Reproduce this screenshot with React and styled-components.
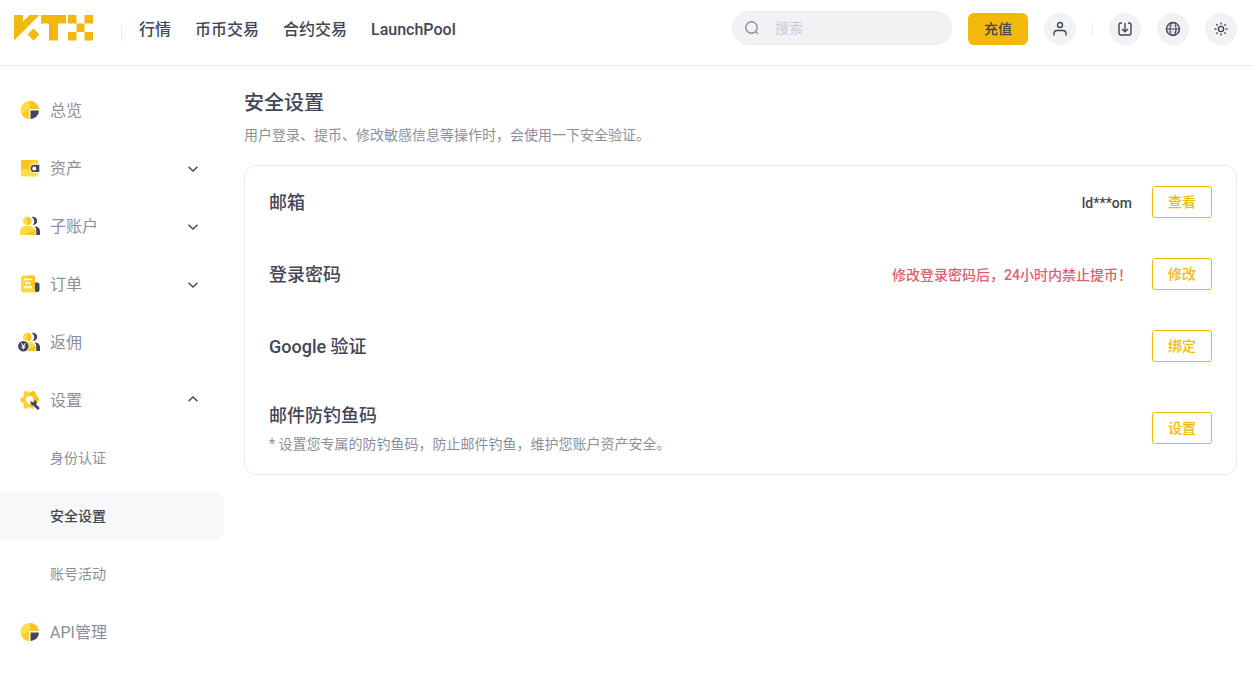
import React, { useState } from "react";
import styled, { createGlobalStyle } from "styled-components";

const navList = ["行情", "币币交易", "合约交易", "LaunchPool"];

const settingList = [
  { name: "身份认证", path: "#identity" },
  { name: "安全设置", path: "#security" },
  { name: "账号活动", path: "#activity" },
];

const Logo = () => (
  <svg width="80" height="26" viewBox="0 0 80 26" fill="#f0b90b" aria-hidden="true">
    <path d="M0 0H9V6.5L15.5 0H25.5L0 25.5Z" />
    <path d="M19.5 13.5L25.5 19.5L19.5 25.5L13.5 19.5Z" />
    <path d="M27 0H52V8.5H44V25.5H35V8.5H27Z" />
    <path d="M54 0H62.5V8.5H54ZM70.5 0H79V8.5H70.5ZM62.5 8.5H70.5V17H62.5ZM54 17H62.5V25.5H54ZM70.5 17H79V25.5H70.5Z" />
  </svg>
);

const OverviewIcon = () => (
  <svg width="20" height="20" viewBox="0 0 20 20" aria-hidden="true">
    <path d="M10 1A9 9 0 0 0 9 19V10L10 9Z" fill="#ffdc4a" />
    <path d="M10 1A9 9 0 0 1 19 9H10Z" fill="#fac31e" />
    <path d="M1.6 13.4L9.200 9V19A9 9 0 0 1 1.600 13.400Z" fill="#fccb2b" />
    <path d="M10.500 10.500H19A8.600 8.600 0 0 1 10.500 19Z" fill="#434656" />
  </svg>
);

const AssetIcon = () => (
  <svg width="20" height="20" viewBox="0 0 20 20" aria-hidden="true">
    <path d="M1 11H18V17A1.500 1.500 0 0 1 16.500 18.500H2.500A1.500 1.500 0 0 1 1 17Z" fill="#ffdc4a" />
    <path d="M1 3.500A1.500 1.500 0 0 1 2.500 2H16.500A1.500 1.500 0 0 1 18 3.500V11H1Z" fill="#fac31e" />
    <path d="M10 2H16.500A1.500 1.500 0 0 1 18 3.500V11H8Z" fill="#fdcf33" />
    <path d="M15 5.700H20V15H15A4.650 4.650 0 0 1 15 5.700Z" fill="#fff" />
    <path d="M14.300 6.800H19.300V14H14.300A3.600 3.600 0 0 1 14.300 6.800Z" fill="#434656" />
    <circle cx="14.300" cy="10.400" r="2" fill="#fff" />
  </svg>
);

const AccountIcon = ({ rebate }) => (
  <svg
    width={rebate ? 22 : 20}
    height="20"
    viewBox={rebate ? "-2 0 22 20" : "0 0 20 20"}
    aria-hidden="true"
  >
    <path d="M11.500 0.800C19 0 19 9 12.500 9.300C15.300 6.500 14.500 3 11.500 0.800Z" fill="#434656" />
    <path d="M14.500 10.200C18.500 10.400 20 12.600 20 15.500V19H16.200V14.500C16.200 12.700 15.800 11.300 14.500 10.200Z" fill="#434656" />
    <circle cx="7.500" cy="5" r="4.200" fill="#fac31e" />
    <path d="M7.500 0.800A4.200 4.200 0 0 0 7.500 9.200Z" fill="#ffdc4a" />
    <path d="M0 19V15.500A5.500 5.500 0 0 1 5.500 10H10A5.500 5.500 0 0 1 15.300 15.500V19Z" fill="#ffd83f" />
    <path d="M15.300 13.500V19H5Z" fill="#fac31e" />
    {rebate && (
      <>
        <circle cx="3.400" cy="14.200" r="6" fill="#fff" />
        <circle cx="3.400" cy="14.200" r="5.300" fill="#434656" />
        <path
          d="M1.300 11.200L3.400 14L5.500 11.200M3.400 14V17.400M1.500 14H5.300M1.500 15.700H5.300"
          stroke="#fff"
          fill="none"
        />
      </>
    )}
  </svg>
);

const OrderIcon = () => (
  <svg width="20" height="20" viewBox="0 0 20 20" aria-hidden="true">
    <path d="M14 8.500H17.500A2 2 0 0 1 19.500 10.500V15.500A2.500 2.500 0 0 1 17 18H14Z" fill="#434656" />
    <path d="M1 3.500A2 2 0 0 1 3 1.500H13A2 2 0 0 1 15 3.500V16.500L16 18.500H3A2 2 0 0 1 1 16.500Z" fill="#ffd83f" />
    <path d="M8 1.500H13A2 2 0 0 1 15 3.500V16L8 9Z" fill="#fac31e" />
    <path
      d="M4 5.500H12M5 9H11M4 13.800L6.300 12L8 14L9.700 12L12 13.800"
      stroke="#fff"
      strokeWidth="1.500"
      fill="none"
    />
  </svg>
);

const SettingIcon = () => (
  <svg width="20" height="20" viewBox="0 0 20 20" aria-hidden="true">
    <g fill="#fdcf33">
      <circle cx="9.700" cy="10" r="7.500" />
      <circle cx="6" cy="3.600" r="2.500" />
      <circle cx="13.400" cy="3.600" r="2.500" />
      <circle cx="2.600" cy="9.800" r="2.500" />
      <circle cx="16.800" cy="9.800" r="2.500" />
      <circle cx="6" cy="16.200" r="2.500" />
      <circle cx="12.500" cy="16.200" r="2.500" />
    </g>
    <path d="M9.700 2.500L13 1.200L16 4.500L19 9L16 12L9.700 10Z" fill="#fac31e" />
    <circle cx="9.700" cy="9.700" r="3.700" fill="#fff" />
    <path d="M12 12L18.500 19" stroke="#fff" strokeWidth="4" />
    <path d="M14.200 14.200L18 18.300" stroke="#434656" strokeWidth="2.800" strokeLinecap="round" />
    <path d="M10 11L13.300 12.300L15.300 9.800L17 13L15 15.800L11.500 15.200Z" fill="#434656" />
  </svg>
);

const Arrow = ({ up }) => (
  <svg width="12" height="12" viewBox="0 0 12 12" fill="none" stroke="#434656" strokeWidth="1.400" aria-hidden="true">
    {up ? <path d="M1.500 7.300L6 3L10.500 7.300" /> : <path d="M1.500 4.700L6 9L10.500 4.700" />}
  </svg>
);

const LineIcon = ({ children }) => (
  <svg
    width="16"
    height="16"
    viewBox="0 0 16 16"
    fill="none"
    stroke="currentColor"
    strokeWidth="1.400"
    aria-hidden="true"
  >
    {children}
  </svg>
);

const menuList = [
  { name: "总览", icon: <OverviewIcon /> },
  { name: "资产", icon: <AssetIcon />, fold: true },
  { name: "子账户", icon: <AccountIcon />, fold: true },
  { name: "订单", icon: <OrderIcon />, fold: true },
  { name: "返佣", icon: <AccountIcon rebate /> },
  { name: "设置", icon: <SettingIcon />, fold: true, children: settingList },
  { name: "API管理", icon: <OverviewIcon /> },
];

const securityList = [
  { title: "邮箱", value: "ld***om", button: "查看" },
  { title: "登录密码", warn: "修改登录密码后，24小时内禁止提币！", button: "修改" },
  { title: "Google 验证", button: "绑定" },
  {
    title: "邮件防钓鱼码",
    desc: "* 设置您专属的防钓鱼码，防止邮件钓鱼，维护您账户资产安全。",
    button: "设置",
  },
];

const Header = () => {
  const [keyword, setKeyword] = useState("");

  return (
    <HeaderInner>
      <LogoLink href="#home" aria-label="KTX">
        <Logo />
      </LogoLink>
      <NavInner>
        {navList.map((item) => (
          <NavLink key={item} href="#nav">
            {item}
          </NavLink>
        ))}
      </NavInner>

      <ToolInner>
        <SearchBox>
          <LineIcon>
            <circle cx="7.500" cy="7.500" r="5.700" />
            <path d="M11.700 11.700L14 14" />
          </LineIcon>
          <SearchInput
            aria-label="搜索"
            placeholder="搜索"
            value={keyword}
            onChange={(e) => setKeyword(e.target.value)}
          />
        </SearchBox>
        <DepositButton>充值</DepositButton>
        <RoundButton aria-label="用户">
          <LineIcon>
            <circle cx="8" cy="4" r="2.500" />
            <path d="M2 14.500V12A3 3 0 0 1 5 9.500H11A3 3 0 0 1 14 12V14.500" />
          </LineIcon>
        </RoundButton>
        <ToolLine />
        <RoundButton aria-label="下载">
          <LineIcon>
            <path d="M5 2H4A2 2 0 0 0 2 4V12A2 2 0 0 0 4 14H12A2 2 0 0 0 14 12V4A2 2 0 0 0 12 2H11M8 2V10.500M5 8L8 10.700L11 8" />
          </LineIcon>
        </RoundButton>
        <RoundButton aria-label="语言">
          <LineIcon>
            <circle cx="8" cy="8" r="6.500" />
            <ellipse cx="8" cy="8" rx="3" ry="6.500" strokeWidth="1.100" />
            <path d="M1.500 8H14.500" strokeWidth="1.100" />
            <path d="M2.500 5H13.500M2.500 11H13.500" strokeWidth="0.300" />
          </LineIcon>
        </RoundButton>
        <RoundButton aria-label="主题">
          <LineIcon>
            <circle cx="8" cy="8" r="2.600" />
            <path d="M8 1.500V3.400M8 12.600V14.500M1.500 8H3.400M12.600 8H14.500M3.300 3.300L4.600 4.600M11.400 11.400L12.700 12.700M3.300 12.700L4.600 11.400M11.400 4.600L12.700 3.300" />
          </LineIcon>
        </RoundButton>
      </ToolInner>
    </HeaderInner>
  );
};

const SideMenu = () => {
  const [opened, setOpened] = useState("设置");
  const [current, setCurrent] = useState("安全设置");

  return (
    <SideInner>
      {menuList.map((menu) => (
        <React.Fragment key={menu.name}>
          <MenuButton
            onClick={() => {
              if (menu.fold) setOpened(opened === menu.name ? "" : menu.name);
            }}
          >
            <MenuIcon>{menu.icon}</MenuIcon>
            <MenuName>{menu.name}</MenuName>
            {menu.fold && <Arrow up={opened === menu.name} />}
          </MenuButton>
          {opened === menu.name &&
            menu.children?.map((sub) => (
              <SubLink
                key={sub.name}
                href={sub.path}
                $active={current === sub.name}
                onClick={() => setCurrent(sub.name)}
              >
                {sub.name}
              </SubLink>
            ))}
        </React.Fragment>
      ))}
    </SideInner>
  );
};

const App = () => {
  return (
    <>
      <GlobalStyle />
      <Header />
      <PageInner>
        <SideMenu />
        <Content>
          <PageTitle>安全设置</PageTitle>
          <PageDesc>用户登录、提币、修改敏感信息等操作时，会使用一下安全验证。</PageDesc>
          <Card>
            {securityList.map((item) => (
              <Row key={item.title} $tall={!!item.desc}>
                <RowText>
                  <RowTitle>{item.title}</RowTitle>
                  {item.desc && <RowDesc>{item.desc}</RowDesc>}
                </RowText>
                {item.value && <RowValue>{item.value}</RowValue>}
                {item.warn && <RowValue $warn>{item.warn}</RowValue>}
                <RowButton>{item.button}</RowButton>
              </Row>
            ))}
          </Card>
        </Content>
      </PageInner>
    </>
  );
};

const GlobalStyle = createGlobalStyle`
  * {
    box-sizing: border-box;
  }

  body {
    margin: 0;
    background: #fff;
    color: #434656;
    font-family: Roboto, "Noto Sans CJK SC", sans-serif;
    font-size: 14px;
  }

  button, input {
    margin: 0;
    padding: 0;
    border: 0;
    background: none;
    color: inherit;
    font: inherit;
  }

  button {
    cursor: pointer;
  }

  a {
    color: inherit;
    text-decoration: none;
  }
`;

const HeaderInner = styled.header`
  display: flex;
  align-items: center;
  padding: 11px 17px 20px 14px;
  border-bottom: 1px solid #ebebeb;
`;

const LogoLink = styled.a`
  display: flex;
`;

const NavInner = styled.nav`
  display: flex;
  gap: 24px;
  margin-left: 27px;

  &::before {
    content: "";
    align-self: flex-end;
    width: 1px;
    height: 16px;
    margin-right: -7px;
    background: #ebebeb;
  }
`;

const NavLink = styled.a`
  padding-top: 4px;
  font-size: 16px;
  font-weight: 500;
  line-height: 24px;
`;

const ToolInner = styled.div`
  display: flex;
  align-items: flex-end;
  gap: 16px;
  margin-left: auto;
`;

const SearchBox = styled.label`
  display: flex;
  align-items: center;
  gap: 15px;
  width: 220px;
  height: 34px;
  padding: 0 11px;
  border: 1px solid #ebebeb;
  border-radius: 17px;
  background: #f1f2f4;
  color: #8c8f9b;
`;

const SearchInput = styled.input`
  flex: 1;
  min-width: 0;
  outline: none;
  color: #434656;

  &::placeholder {
    color: #c8cad6;
  }
`;

const DepositButton = styled.button`
  width: 60px;
  height: 32px;
  padding-bottom: 2px;
  border-radius: 6px;
  background: #f0b90b;
  font-weight: 500;
`;

const RoundButton = styled.button`
  display: flex;
  align-items: center;
  justify-content: center;
  width: 32px;
  height: 32px;
  border-radius: 50%;
  background: #f1f2f4;
`;

const ToolLine = styled.span`
  width: 1px;
  height: 14px;
  margin-bottom: 9px;
  background: #ebebeb;
`;

const PageInner = styled.div`
  display: flex;
  gap: 20px;
  padding-right: 17px;
`;

const SideInner = styled.aside`
  display: flex;
  flex-direction: column;
  flex-shrink: 0;
  gap: 10px;
  width: 224px;
  padding: 20px 0 24px;
`;

const MenuButton = styled.button`
  display: flex;
  align-items: center;
  gap: 10px;
  height: 48px;
  padding: 0 25px 0 20px;
  color: #8c8f9b;
  font-size: 16px;
  text-align: left;
`;

const MenuIcon = styled.span`
  display: flex;
  justify-content: flex-end;
  width: 20px;

  svg {
    flex-shrink: 0;
  }
`;

const MenuName = styled.span`
  flex: 1;
  padding-bottom: 2px;
`;

const SubLink = styled.a`
  padding-left: 50px;
  border-radius: 0 12px 12px 0;
  background: ${({ $active }) => ($active ? "#f7f8fa" : "transparent")};
  color: ${({ $active }) => ($active ? "#434656" : "#8c8f9b")};
  font-weight: ${({ $active }) => ($active ? 500 : 400)};
  line-height: 48px;
`;

const Content = styled.main`
  flex: 1;
  min-width: 0;
  padding: 20px 0;
`;

const PageTitle = styled.h1`
  margin: 0;
  font-size: 20px;
  font-weight: 500;
  line-height: 34px;
`;

const PageDesc = styled.p`
  margin: 4px 0 19px;
  color: #8c8f9b;
  line-height: 22px;
`;

const Card = styled.section`
  border: 1px solid #ebebeb;
  border-radius: 12px;
`;

const Row = styled.div`
  display: flex;
  align-items: center;
  gap: 20px;
  height: ${({ $tall }) => ($tall ? 92 : 72)}px;
  padding: 0 24px;
`;

const RowText = styled.div`
  flex: 1;
`;

const RowTitle = styled.h2`
  margin: 0;
  font-size: 18px;
  font-weight: 500;
  line-height: 32px;

  &:only-child {
    padding-top: 2px;
  }
`;

const RowDesc = styled.p`
  margin: 0;
  color: #8c8f9b;
  line-height: 24px;
`;

const RowValue = styled.span`
  padding-top: 2px;
  color: ${({ $warn }) => ($warn ? "#dc5f6f" : "#434656")};
  font-weight: 500;
  line-height: 22px;
`;

const RowButton = styled.button`
  width: 60px;
  height: 32px;
  padding-bottom: 2px;
  border: 1px solid #f0b90b;
  border-radius: 3px;
  color: #f0b90b;
  font-weight: 500;
`;

export default App;
